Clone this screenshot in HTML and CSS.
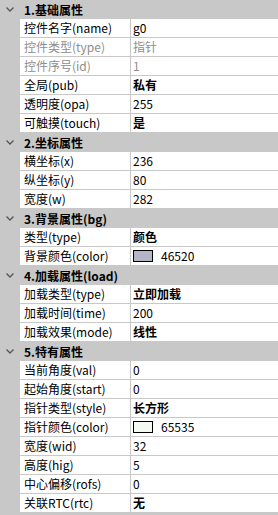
FILE: index.html
```html
<!DOCTYPE html>
<html lang="zh">

<head>
    <meta charset="UTF-8">
    <title>属性</title>
    <link rel="stylesheet" href="styles.css">
</head>

<body>
    <div class="props">
        <div class="group">
            <svg class="arrow" width="8" height="5" viewBox="0 0 8 5"><polyline points="0.5,0.5 4,4 7.5,0.5" fill="none" stroke="#555" stroke-width="1.3"/></svg>
            <span>1.基础属性</span>
        </div>
        <div class="row"><div class="name">控件名字(name)</div><div class="val">g0</div></div>
        <div class="row off"><div class="name">控件类型(type)</div><div class="val">指针</div></div>
        <div class="row off"><div class="name">控件序号(id)</div><div class="val">1</div></div>
        <div class="row"><div class="name">全局(pub)</div><div class="val b">私有</div></div>
        <div class="row"><div class="name">透明度(opa)</div><div class="val">255</div></div>
        <div class="row"><div class="name">可触摸(touch)</div><div class="val b">是</div></div>

        <div class="group">
            <svg class="arrow" width="8" height="5" viewBox="0 0 8 5"><polyline points="0.5,0.5 4,4 7.5,0.5" fill="none" stroke="#555" stroke-width="1.3"/></svg>
            <span>2.坐标属性</span>
        </div>
        <div class="row"><div class="name">横坐标(x)</div><div class="val">236</div></div>
        <div class="row"><div class="name">纵坐标(y)</div><div class="val">80</div></div>
        <div class="row"><div class="name">宽度(w)</div><div class="val">282</div></div>

        <div class="group">
            <svg class="arrow" width="8" height="5" viewBox="0 0 8 5"><polyline points="0.5,0.5 4,4 7.5,0.5" fill="none" stroke="#555" stroke-width="1.3"/></svg>
            <span>3.背景属性(bg)</span>
        </div>
        <div class="row"><div class="name">类型(type)</div><div class="val b">颜色</div></div>
        <div class="row"><div class="name">背景颜色(color)</div><div class="val"><i class="swatch" style="background: rgb(181, 182, 197)"></i>46520</div></div>

        <div class="group">
            <svg class="arrow" width="8" height="5" viewBox="0 0 8 5"><polyline points="0.5,0.5 4,4 7.5,0.5" fill="none" stroke="#555" stroke-width="1.3"/></svg>
            <span>4.加载属性(load)</span>
        </div>
        <div class="row"><div class="name">加载类型(type)</div><div class="val b">立即加载</div></div>
        <div class="row"><div class="name">加载时间(time)</div><div class="val">200</div></div>
        <div class="row"><div class="name">加载效果(mode)</div><div class="val b">线性</div></div>

        <div class="group">
            <svg class="arrow" width="8" height="5" viewBox="0 0 8 5"><polyline points="0.5,0.5 4,4 7.5,0.5" fill="none" stroke="#555" stroke-width="1.3"/></svg>
            <span>5.特有属性</span>
        </div>
        <div class="row"><div class="name">当前角度(val)</div><div class="val">0</div></div>
        <div class="row"><div class="name">起始角度(start)</div><div class="val">0</div></div>
        <div class="row"><div class="name">指针类型(style)</div><div class="val b">长方形</div></div>
        <div class="row"><div class="name">指针颜色(color)</div><div class="val"><i class="swatch" style="background: #f4f9f4"></i>65535</div></div>
        <div class="row"><div class="name">宽度(wid)</div><div class="val">32</div></div>
        <div class="row"><div class="name">高度(hig)</div><div class="val">5</div></div>
        <div class="row"><div class="name">中心偏移(rofs)</div><div class="val">0</div></div>
        <div class="row"><div class="name">关联RTC(rtc)</div><div class="val b">无</div></div>
    </div>
</body>

</html>
```

FILE: styles.css
```css
body {
    margin: 0;
    background: #fff;
    font-family: "Noto Sans CJK SC", "Microsoft YaHei", sans-serif;
    font-size: 12px;
    color: #000;
}

.props {
    width: 278px;
    background: #c8c8c8;
    padding-bottom: 2px;
}

.group {
    height: 19px;
    display: flex;
    align-items: center;
    font-weight: bold;
    background: #c8c8c8;
}

.group .arrow {
    width: 20px;
    flex: none;
    padding: 0 6px 0 6px;
    box-sizing: border-box;
}

.group span {
    padding-left: 4px;
}

.row {
    display: flex;
    height: 18px;
    margin-left: 20px;
    border-bottom: 1px solid #c8c8c8;
    background: #fff;
}

.name {
    width: 111px;
    flex: none;
    padding-left: 4px;
    box-sizing: border-box;
    border-right: 1px solid #c8c8c8;
    line-height: 18px;
    white-space: nowrap;
    overflow: hidden;
}

.val {
    flex: 1;
    padding-left: 2px;
    line-height: 18px;
    display: flex;
    align-items: center;
}

.b {
    font-weight: bold;
}

.off .name,
.off .val {
    color: #8e8e8e;
}

.swatch {
    display: inline-block;
    width: 18px;
    height: 10px;
    border: 1px solid #000;
    margin-right: 8px;
}
```
